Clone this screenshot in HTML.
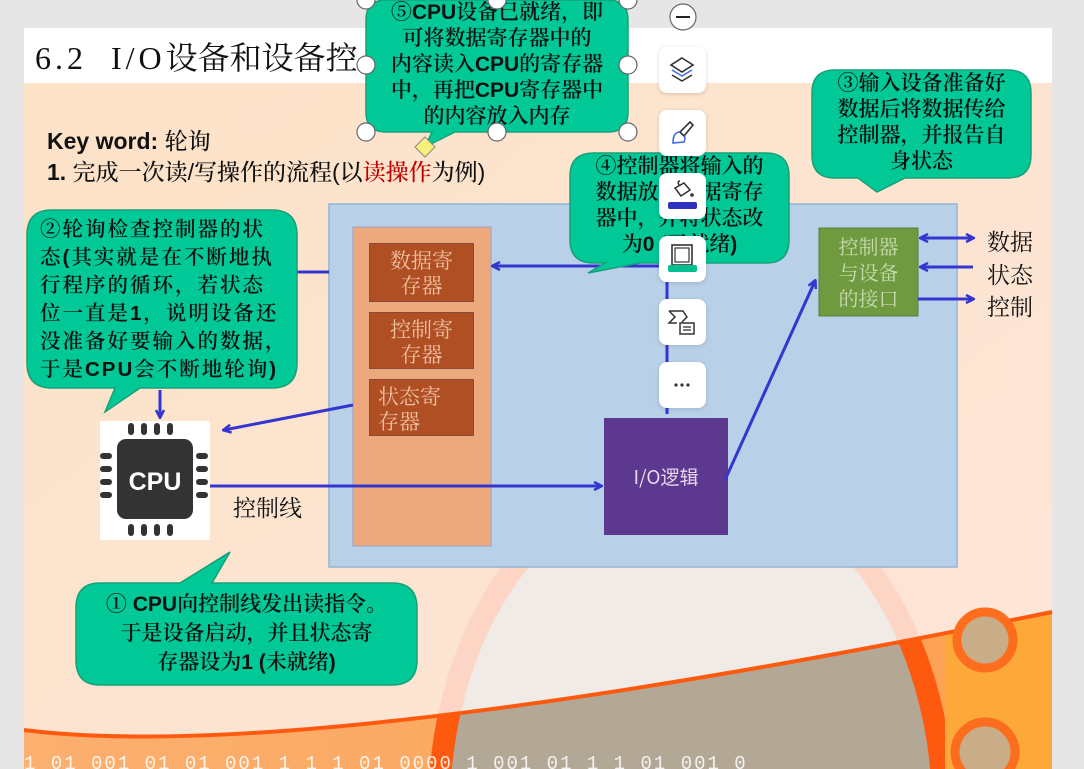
<!DOCTYPE html>
<html><head><meta charset="utf-8"><style>
*{margin:0;padding:0;box-sizing:border-box}
html,body{width:1084px;height:769px;overflow:hidden}
body{background:#e6e6e6;position:relative;font-family:"Liberation Sans","Noto Sans CJK SC",sans-serif}
.a{position:absolute;white-space:nowrap}
.co{position:absolute;white-space:nowrap;color:#111;text-align:center;font-size:21px;line-height:26px;font-weight:600;font-family:"Liberation Sans","Noto Serif CJK SC",serif}
.co b{font-family:"Liberation Sans",sans-serif}
.tb{position:absolute;left:659px;width:47px;height:46px;background:#fff;border-radius:8px;box-shadow:0 1px 4px rgba(0,0,0,.15)}
.reg{position:absolute;left:369px;width:105px;background:#b04f24;border:1px solid #8a4a3a;color:#f0c0a0;font-size:21px;line-height:25px;text-align:center;font-family:"Noto Serif CJK SC",serif;padding-top:4px}
.lab{position:absolute;left:987px;font-size:23px;color:#111;font-family:"Noto Serif CJK SC",serif}
</style></head><body>
<svg class="a" style="left:0;top:0" width="1084" height="769">
<defs>
<linearGradient id="bg" x1="0" y1="0" x2="1" y2="1"><stop offset="0" stop-color="#fce2c6"/><stop offset="1" stop-color="#fde6da"/></linearGradient>
<linearGradient id="or" x1="0" y1="0" x2="1" y2="0"><stop offset="0" stop-color="#fbb070"/><stop offset="1" stop-color="#fca050"/></linearGradient>
<clipPath id="low"><path d="M24 730 Q300 765 1052 612 L1052 769 L24 769Z"/></clipPath>
<marker id="ar" markerWidth="10" markerHeight="10" refX="8" refY="5" orient="auto" markerUnits="userSpaceOnUse"><path d="M1 1 L9 5 L1 9" fill="none" stroke="#3535d0" stroke-width="2.5"/></marker>
</defs>
<rect x="24" y="28" width="1028" height="741" fill="url(#bg)"/>
<rect x="24" y="28" width="1028" height="55" fill="#fff"/>
<ellipse cx="691" cy="810" rx="252" ry="340" fill="#f0ebe6" stroke="#fcd5c4" stroke-width="22"/>
<g clip-path="url(#low)">
<rect x="24" y="600" width="1028" height="169" fill="url(#or)"/>
<ellipse cx="691" cy="810" rx="252" ry="340" fill="#b3a795" stroke="#fd5a10" stroke-width="22"/>
<rect x="945" y="600" width="107" height="169" fill="#fda93a"/>
</g>
<path d="M24 730 Q300 765 1052 612" fill="none" stroke="#fd5a10" stroke-width="4"/>
<circle cx="985" cy="640" r="28" fill="#c9ad88" stroke="#fd6d1e" stroke-width="9"/>
<circle cx="985" cy="752" r="30" fill="#c9ad88" stroke="#fd6d1e" stroke-width="9"/>
<text x="24" y="769" font-size="19" letter-spacing="2" fill="#fff" font-family="Liberation Mono" opacity=".85">1 01 001 01 01 001 1 1 1 01 0000 1 001 01 1 1 01 001 0</text>
<rect x="329" y="204" width="628" height="363" fill="#b8d0e8" stroke="#96b2d4" stroke-width="1.5"/>
<rect x="353" y="227" width="138" height="319" fill="#eca97e" stroke="#a0a0c0"/>
<rect x="604" y="418" width="124" height="117" fill="#5c388e"/>
<rect x="819" y="228" width="99" height="88" fill="#6f9a40" stroke="#5a8040"/>
<g stroke="#3535d0" stroke-width="3" fill="none">
<line x1="297" y1="272" x2="329" y2="272"/>
<line x1="160" y1="390" x2="160" y2="417" marker-end="url(#ar)"/>
<line x1="660" y1="266" x2="493" y2="266" marker-end="url(#ar)"/>
<line x1="667" y1="282" x2="667" y2="414"/>
<line x1="353" y1="405" x2="224" y2="430" marker-end="url(#ar)"/>
<line x1="210" y1="486" x2="601" y2="486" marker-end="url(#ar)"/>
<line x1="725" y1="480" x2="815" y2="281" marker-end="url(#ar)"/>
<line x1="921" y1="238" x2="973" y2="238" marker-end="url(#ar)"/>
<line x1="968" y1="238" x2="921" y2="238" marker-end="url(#ar)"/>
<line x1="973" y1="267" x2="921" y2="267" marker-end="url(#ar)"/>
<line x1="918" y1="299" x2="973" y2="299" marker-end="url(#ar)"/>
</g>
<rect x="100" y="421" width="110" height="119" fill="#fff"/>
<rect x="117" y="439" width="76" height="80" rx="9" fill="#333"/>
<g fill="#333">
<rect x="128" y="423" width="6" height="12" rx="3"/><rect x="141" y="423" width="6" height="12" rx="3"/><rect x="154" y="423" width="6" height="12" rx="3"/><rect x="167" y="423" width="6" height="12" rx="3"/>
<rect x="128" y="524" width="6" height="12" rx="3"/><rect x="141" y="524" width="6" height="12" rx="3"/><rect x="154" y="524" width="6" height="12" rx="3"/><rect x="167" y="524" width="6" height="12" rx="3"/>
<rect x="100" y="453" width="12" height="6" rx="3"/><rect x="100" y="466" width="12" height="6" rx="3"/><rect x="100" y="479" width="12" height="6" rx="3"/><rect x="100" y="492" width="12" height="6" rx="3"/>
<rect x="196" y="453" width="12" height="6" rx="3"/><rect x="196" y="466" width="12" height="6" rx="3"/><rect x="196" y="479" width="12" height="6" rx="3"/><rect x="196" y="492" width="12" height="6" rx="3"/>
</g>
<text x="155" y="490" text-anchor="middle" font-size="25" font-weight="bold" fill="#fff" font-family="Liberation Sans">CPU</text>
<g fill="#00c896" stroke="#18a078" stroke-width="1.5">
<path d="M52 210 H272 Q297 210 297 235 V363 Q297 388 272 388 H140 L105 412 L115 388 H52 Q27 388 27 363 V235 Q27 210 52 210Z"/>
<path d="M100 583 H180 L230 552 L212 583 H392 Q417 583 417 608 V660 Q417 685 392 685 H100 Q76 685 76 660 V608 Q76 583 100 583Z"/>
<path d="M386 0 H608 Q628 0 628 20 V112 Q628 132 608 132 H455 L425 147 L432 132 H386 Q366 132 366 112 V20 Q366 0 386 0Z"/>
<path d="M594 153 H766 Q789 153 789 176 V240 Q789 263 766 263 H640 L588 273 L605 263 H594 Q570 263 570 240 V176 Q570 153 594 153Z"/>
<path d="M835 70 H1008 Q1031 70 1031 93 V155 Q1031 178 1008 178 H905 L877 192 L858 178 H835 Q812 178 812 155 V93 Q812 70 835 70Z"/>
</g>
</svg>
<div class="a" style="left:35px;top:33px;font-size:32px;font-family:'Liberation Serif','Noto Serif CJK SC',serif;color:#111"><span style="letter-spacing:4px">6.2</span>&nbsp;&nbsp;&nbsp;<span style="letter-spacing:4px">I/O</span><span style="font-family:'Noto Serif CJK SC',serif">设备和设备控</span></div>
<div class="a" style="left:47px;top:126px;font-size:23px;line-height:31px;color:#111;font-family:'Liberation Sans','Noto Serif CJK SC',sans-serif;font-weight:500"><b>Key word:</b> 轮询<br><b>1.</b> 完成一次读/写操作的流程(以<span style="color:#c00000">读操作</span>为例)</div>
<div class="reg" style="top:243px;height:59px">数据寄<br>存器</div>
<div class="reg" style="top:312px;height:57px">控制寄<br>存器</div>
<div class="reg" style="top:379px;height:57px;text-align:left;padding-left:8px">状态寄<br>存器</div>
<div class="a" style="left:604px;top:463px;width:124px;text-align:center;color:#e8d8f0;font-size:19px;font-family:'Noto Sans CJK SC',sans-serif">I/O逻辑</div>
<div class="a" style="left:819px;top:233px;width:99px;text-align:center;color:#c8dcb0;font-size:20px;line-height:26px;font-family:'Noto Serif CJK SC',serif">控制器<br>与设备<br>的接口</div>
<div class="lab" style="top:224px">数据</div>
<div class="lab" style="top:257px">状态</div>
<div class="lab" style="top:289px">控制</div>
<div class="a" style="left:233px;top:490px;font-size:23px;color:#111;font-family:'Noto Serif CJK SC',serif">控制线</div>
<div class="co" style="left:40px;top:216px;text-align:left;line-height:28px;letter-spacing:2px;font-size:20.5px">②轮询检查控制器的状<br>态(其实就是在不断地执<br>行程序的循环，若状态<br>位一直是1，说明设备还<br>没准备好要输入的数据，<br>于是<b>CPU</b>会不断地轮询)</div>
<div class="co" style="left:76px;top:590px;width:341px;line-height:29px">① <b>CPU</b>向控制线发出读指令。<br>于是设备启动，并且状态寄<br>存器设为<b>1</b> (未就绪)</div>
<div class="co" style="left:366px;top:0px;width:262px;line-height:26px">⑤<b>CPU</b>设备已就绪，即<br>可将数据寄存器中的<br>内容读入<b>CPU</b>的寄存器<br>中，再把<b>CPU</b>寄存器中<br>的内容放入内存</div>
<div class="co" style="left:572px;top:154px;width:215px;line-height:26px">④控制器将输入的<br>数据放入数据寄存<br>器中，并将状态改<br>为<b>0</b> (已就绪)</div>
<div class="co" style="left:812px;top:71px;width:219px;line-height:26px">③输入设备准备好<br>数据后将数据传给<br>控制器，并报告自<br>身状态</div>
<svg class="a" style="left:0;top:0" width="1084" height="200">
<g fill="#fff" stroke="#666" stroke-width="1.2">
<circle cx="366" cy="0" r="9"/><circle cx="497" cy="0" r="9"/><circle cx="628" cy="0" r="9"/>
<circle cx="366" cy="65" r="9"/><circle cx="628" cy="65" r="9"/>
<circle cx="366" cy="132" r="9"/><circle cx="497" cy="132" r="9"/><circle cx="628" cy="132" r="9"/>
<circle cx="683" cy="17" r="13"/>
</g>
<path d="M425 137 L435 147 L425 157 L415 147Z" fill="#f8f07a" stroke="#888"/>
<line x1="676" y1="17" x2="690" y2="17" stroke="#222" stroke-width="2"/>
</svg>
<div class="tb" style="top:47px"><svg width="47" height="46"><path d="M23 11 L34 18 L23 25 L12 18Z" fill="none" stroke="#333" stroke-width="1.6"/><path d="M13 23 L23 29 L33 23" fill="none" stroke="#3a6cf0" stroke-width="1.6"/><path d="M13 28 L23 34 L33 28" fill="none" stroke="#333" stroke-width="1.6"/></svg></div>
<div class="tb" style="top:110px"><svg width="47" height="46"><path d="M31 12 L34 15 L25 26 L21 22Z" fill="none" stroke="#333" stroke-width="1.6"/><path d="M21 22 Q14 22 14 33 L25 32 Q27 27 25 26" fill="none" stroke="#3a6cf0" stroke-width="1.6"/></svg></div>
<div class="tb" style="top:173px"><svg width="47" height="46"><path d="M16 15 L25 10 L31 17 L22 23Z M20 12 Q18 8 21 8" fill="none" stroke="#333" stroke-width="1.5"/><circle cx="33" cy="22" r="1.8" fill="#333"/><rect x="9" y="29" width="29" height="7" rx="2" fill="#3030c0"/></svg></div>
<div class="tb" style="top:236px"><svg width="47" height="46"><rect x="13" y="9" width="20" height="20" fill="none" stroke="#333" stroke-width="1.6"/><rect x="16" y="12" width="14" height="14" fill="none" stroke="#333" stroke-width="1.2"/><rect x="9" y="29" width="29" height="7" rx="2" fill="#00c090"/></svg></div>
<div class="tb" style="top:299px"><svg width="47" height="46"><path d="M10 12 H24 L28 18 L23 23 M10 12 L16 18 L10 24 H18" fill="none" stroke="#333" stroke-width="1.5"/><rect x="21" y="24" width="14" height="11" fill="#fff" stroke="#333" stroke-width="1.5"/><line x1="24" y1="28" x2="32" y2="28" stroke="#333" stroke-width="1.3"/><line x1="24" y1="31" x2="32" y2="31" stroke="#333" stroke-width="1.3"/></svg></div>
<div class="tb" style="top:362px"><svg width="47" height="46"><circle cx="17" cy="23" r="1.6" fill="#333"/><circle cx="23" cy="23" r="1.6" fill="#333"/><circle cx="29" cy="23" r="1.6" fill="#333"/></svg></div>
</body></html>
